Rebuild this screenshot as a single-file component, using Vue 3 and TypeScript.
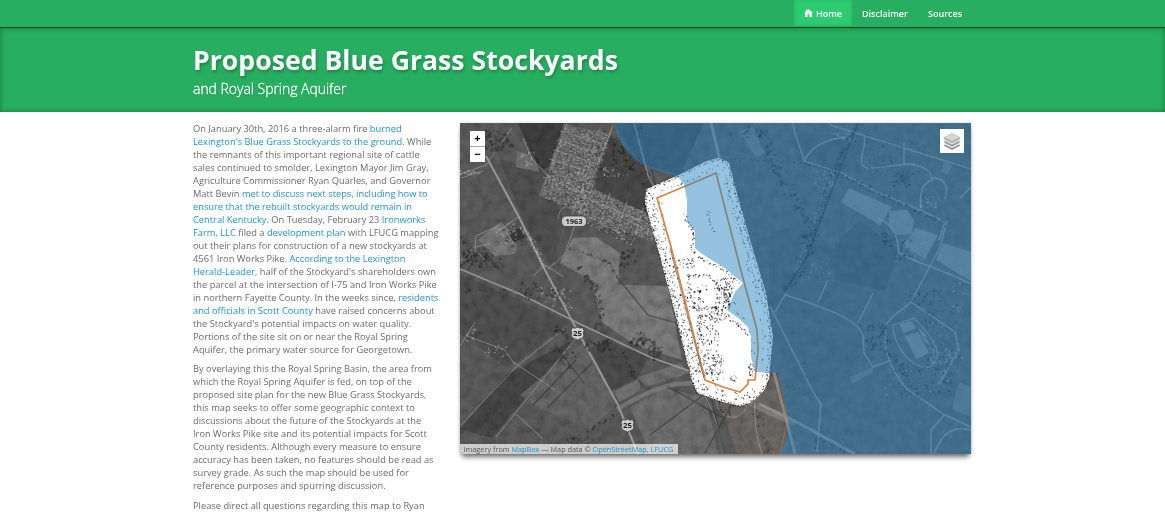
<script setup lang="ts">
interface Segment { text: string; link?: boolean }
interface Mark { x: number; y: number; w: number; h: number; a: number; o: number }

const t = (text: string): Segment => ({ text })
const l = (text: string): Segment => ({ text, link: true })

const paragraphs: Segment[][][] = [
  [
    [t('On January 30th, 2016 a three-alarm fire '), l('burned')],
    [l("Lexington's Blue Grass Stockyards to the ground"), t('. While')],
    [t('the remnants of this important regional site of cattle')],
    [t('sales continued to smolder, Lexington Mayor Jim Gray,')],
    [t('Agriculture Commissioner Ryan Quarles, and Governor')],
    [t('Matt Bevin '), l('met to discuss next steps, including how to')],
    [l('ensure that the rebuilt stockyards would remain in')],
    [l('Central Kentucky'), t('. On Tuesday, February 23 '), l('Ironworks')],
    [l('Farm, LLC'), t(' filed a '), l('development plan'), t(' with LFUCG mapping')],
    [t('out their plans for construction of a new stockyards at')],
    [t('4561 Iron Works Pike. '), l('According to the Lexington')],
    [l('Herald-Leader'), t(", half of the Stockyard's shareholders own")],
    [t('the parcel at the intersection of I-75 and Iron Works Pike')],
    [t('in northern Fayette County. In the weeks since, '), l('residents')],
    [l('and officials in Scott County'), t(' have raised concerns about')],
    [t("the Stockyard's potential impacts on water quality.")],
    [t('Portions of the site sit on or near the Royal Spring')],
    [t('Aquifer, the primary water source for Georgetown.')],
  ],
  [
    [t('By overlaying this the Royal Spring Basin, the area from')],
    [t('which the Royal Spring Aquifer is fed, on top of the')],
    [t('proposed site plan for the new Blue Grass Stockyards,')],
    [t('this map seeks to offer some geographic context to')],
    [t('discussions about the future of the Stockyards at the')],
    [t('Iron Works Pike site and its potential impacts for Scott')],
    [t('County residents. Although every measure to ensure')],
    [t('accuracy has been taken, no features should be read as')],
    [t('survey grade. As such the map should be used for')],
    [t('reference purposes and spurring discussion.')],
  ],
  [[t('Please direct all questions regarding this map to Ryan')]],
]

let seed = 41
const rnd = (): number => {
  seed = (seed * 16807) % 2147483647
  return seed / 2147483647
}

function alongPath(points: number[][], step: number, spread: number, size = 1.6): Mark[] {
  const out: Mark[] = []
  for (let i = 0; i < points.length - 1; i++) {
    const [x1, y1] = points[i]
    const [x2, y2] = points[i + 1]
    const len = Math.hypot(x2 - x1, y2 - y1)
    for (let d = 0; d < len; d += step) {
      const k = d / len
      out.push({
        x: x1 + (x2 - x1) * k + (rnd() - 0.5) * spread,
        y: y1 + (y2 - y1) * k + (rnd() - 0.5) * spread,
        w: 0.6 + rnd() * size,
        h: 0.5 + rnd() * size * 0.7,
        a: rnd() * 180,
        o: 0.45 + rnd() * 0.5,
      })
    }
  }
  return out
}

function cluster(cx: number, cy: number, w: number, h: number, n: number, size = 2): Mark[] {
  return Array.from({ length: n }, () => ({
    x: cx + (rnd() - 0.5) * w,
    y: cy + (rnd() - 0.5) * h,
    w: 0.6 + rnd() * size,
    h: 0.6 + rnd() * size * 0.6,
    a: rnd() * 180,
    o: 0.35 + rnd() * 0.6,
  }))
}

// Rows of small lots spanning the parallelogram of two edge vectors
function lots(x: number, y: number, ux: number, uy: number, vx: number, vy: number, nu: number, nv: number): Mark[] {
  const out: Mark[] = []
  const a = (Math.atan2(uy, ux) * 180) / Math.PI
  for (let i = 0; i < nu; i++) {
    for (let j = 0; j < nv; j++) {
      if (rnd() < 0.16) continue
      const u = (i + 0.2 + rnd() * 0.6) / nu
      const v = (j + 0.2 + rnd() * 0.6) / nv
      out.push({ x: x + ux * u + vx * v, y: y + uy * u + vy * v, w: 0.8 + rnd() * 1.5, h: 0.8 + rnd() * 0.9, a, o: 0.25 + rnd() * 0.6 })
    }
  }
  return out
}

const lotAreas: [number, number, number, number, number, number, number, number][] = [
  [564, 124, 47, 10, -20, 56, 21, 25],
  [548, 172, 42, 18, -8, 24, 18, 11],
  [583, 183, 77, 34, -8, 24, 32, 11],
  [578, 207, 58, 28, -4, 10, 24, 5],
]
const houses: Mark[] = [
  ...lotAreas.flatMap((a) => lots(...a)),
  ...cluster(527, 158, 16, 14, 24), ...cluster(507, 232, 22, 25, 26),
  ...cluster(549, 295, 16, 20, 22), ...cluster(567, 300, 10, 22, 18),
  ...cluster(471, 334, 10, 18, 18), ...cluster(497, 350, 22, 14, 20),
  ...cluster(472, 172, 24, 5, 22), ...cluster(615, 172, 26, 10, 18),
  ...alongPath([[522, 225], [546, 268]], 1.3, 5, 2),
]
const lotShadows: Mark[] = lotAreas.flatMap((a) => lots(...a))
const trees: Mark[] = [
  ...cluster(483, 258, 42, 18, 60, 4), ...cluster(498, 140, 26, 20, 50, 4),
  ...cluster(487, 290, 90, 4, 20, 3), ...cluster(600, 344, 28, 12, 35, 4),
  ...cluster(560, 330, 12, 10, 14, 4), ...cluster(629, 257, 14, 18, 30, 4),
  ...cluster(640, 340, 16, 16, 32, 4), ...cluster(656, 350, 14, 18, 30, 4),
  ...cluster(566, 358, 18, 18, 24, 3), ...cluster(650, 200, 12, 60, 32, 3),
  ...cluster(539, 290, 42, 16, 26, 4), ...cluster(515, 238, 20, 22, 22, 3),
  ...alongPath([[582, 268], [596, 287], [603, 315], [596, 330]], 1.4, 5, 3),
  ...alongPath([[623, 350], [634, 372], [642, 387]], 1.5, 3, 3),
  ...alongPath([[585, 436], [600, 423], [620, 412]], 2, 3, 2.5),
  ...alongPath([[530, 138], [535, 158], [554, 174]], 2, 5, 2.5),
  ...cluster(615, 155, 45, 28, 70, 2.8), ...cluster(478, 420, 30, 30, 12, 2),
  ...alongPath([[570, 248], [610, 262], [618, 276]], 1.4, 2, 2),
  ...alongPath([[757, 405], [768, 452]], 2, 9, 2),
  ...alongPath([[460, 236], [474, 257], [490, 269]], 2, 6, 3),
  ...cluster(580, 440, 28, 7, 18, 3), ...cluster(564, 449, 140, 6, 32, 3),
  ...cluster(725, 412, 12, 8, 14, 3),
]
const eastTrees: Mark[] = [
  ...alongPath([[757, 129], [774, 160], [790, 190], [813, 225], [803, 245]], 1.4, 10, 4),
  ...alongPath([[731, 158], [804, 163], [840, 172]], 2.3, 2, 2),
  ...alongPath([[855, 128], [832, 175], [820, 220], [803, 270], [786, 291]], 1.5, 5, 3),
  ...alongPath([[835, 171], [857, 182], [910, 207], [946, 224]], 1.6, 4, 2.5),
  ...cluster(903, 178, 18, 16, 44, 3), ...cluster(889, 157, 70, 34, 60, 2),
  ...cluster(889, 239, 14, 12, 34, 3), ...cluster(904, 250, 14, 22, 34, 3),
  ...cluster(876, 337, 18, 28, 60, 3), ...cluster(923, 382, 60, 30, 80, 3),
  ...cluster(942, 330, 38, 80, 68, 2.5), ...cluster(926, 295, 30, 18, 28, 3),
  ...cluster(830, 444, 32, 12, 22, 3), ...cluster(798, 378, 20, 32, 18, 2),
  ...cluster(630, 144, 26, 38, 30, 3), ...cluster(749, 132, 38, 14, 24, 3),
  ...alongPath([[884, 330], [892, 355], [910, 380]], 1.3, 7, 3),
]
const eastLights: Mark[] = [
  ...cluster(841, 136, 22, 8, 38), ...cluster(824, 180, 20, 20, 46),
  ...cluster(815, 272, 32, 20, 38), ...cluster(911, 250, 30, 26, 50),
  ...cluster(930, 202, 20, 12, 26, 3), ...cluster(945, 356, 28, 14, 38, 3),
  ...cluster(917, 384, 64, 30, 70), ...cluster(959, 300, 18, 40, 34),
  ...cluster(949, 337, 36, 70, 46), ...alongPath([[832, 175], [816, 225], [796, 270]], 2, 5, 1.8),
]

const planOutline = [[647, 190], [677, 177], [707, 162], [718, 159], [728, 163], [737, 197], [750, 243], [765, 293], [772, 337], [768, 380], [763, 390], [752, 401], [740, 405], [723, 401], [698, 392], [692, 378], [677, 317], [660, 253], [646, 203], [647, 190]]
const planInk: Mark[] = [
  ...alongPath(planOutline, 1.7, 2.2, 1.2),
  ...alongPath([[650, 192], [657, 231], [669, 273], [683, 324], [697, 382]], 1.5, 6, 1.3),
  ...alongPath([[657, 203], [683, 302], [706, 382]], 2.2, 7, 1.3),
  ...alongPath([[720, 166], [738, 220], [760, 298], [768, 336], [763, 380]], 2.7, 8, 1),
  ...alongPath([[726, 180], [744, 240], [763, 305]], 3.5, 1, 1),
  ...alongPath([[661, 192], [699, 176], [715, 168]], 2.6, 3, 1),
  ...alongPath([[699, 385], [724, 393], [742, 397], [754, 389]], 1.9, 7, 1.5),
  ...alongPath([[684, 214], [693, 232], [692, 250], [704, 260], [722, 268], [739, 282]], 2, 3, 1.5),
  ...alongPath([[688, 276], [707, 274], [724, 290], [731, 305], [695, 309], [688, 276]], 1.6, 2, 1.6),
  ...cluster(685, 264, 20, 12, 26, 1.5), ...cluster(724, 290, 18, 26, 80, 1.6),
  ...cluster(719, 313, 24, 14, 55, 1.5), ...cluster(694, 300, 18, 26, 38, 1.6),
  ...cluster(708, 344, 22, 60, 170, 1.3), ...cluster(717, 367, 16, 26, 50, 1.3),
  ...cluster(704, 288, 12, 10, 7), ...cluster(733, 378, 5, 7, 14, 1),
  ...cluster(751, 370, 5, 12, 20, 1.2),
  ...alongPath([[729, 316], [740, 325], [748, 335]], 2, 2, 1.5),
  ...alongPath([[708, 210], [711, 222], [713, 232]], 2, 2, 1.5),
  ...alongPath([[733, 301], [744, 320], [753, 344], [753, 370]], 5, 5, 1.2),
]
const outlinePoints = planOutline.map((p) => p.join(',')).join(' ')
const basin = 'M614 123 C617 141 626 153 640 163 C652 170 665 173 677 176 L684 184 L687 200 L687 222 L695 232 L695 248 L702 254 L723 267 L743 283 L735 292 L727 310 L737 317 L748 327 L751 337 L751 357 L755 372 L778 373 L783 392 L788 418 L787 438 L780 454 H971 V123 Z'
const place = (m: Mark): string => `translate(${m.x.toFixed(1)} ${m.y.toFixed(1)}) rotate(${m.a.toFixed(0)})`
</script>

<template>
  <div class="page">
    <nav class="topbar">
      <div class="wrap links">
        <a class="item active">
          <svg class="home" viewBox="0 0 10 9"><path d="M5 0 10 4.6H8.7V9H6.1V5.8H3.9V9H1.3V4.6H0L2 2.8V.8h1.4v.7Z" /></svg>
          <span>Home</span>
        </a>
        <a class="item disclaimer">Disclaimer</a>
        <a class="item sources">Sources</a>
      </div>
    </nav>

    <header class="hero">
      <div class="wrap">
        <h1>Proposed Blue Grass Stockyards</h1>
        <h2>and Royal Spring Aquifer</h2>
      </div>
    </header>

    <main class="wrap content">
      <article>
        <p v-for="(lines, pi) in paragraphs" :key="pi">
          <span v-for="(line, li) in lines" :key="li" class="line"><template v-for="(s, si) in line" :key="si"><a v-if="s.link">{{ s.text }}</a><span v-else>{{ s.text }}</span></template></span>
        </p>
      </article>

      <section class="map">
        <svg class="canvas" viewBox="460 123 511 331">
          <defs>
            <filter id="ground" x="0" y="0" width="100%" height="100%">
              <feTurbulence type="fractalNoise" baseFrequency=".11" numOctaves="4" seed="8" />
              <feColorMatrix values=".9 0 0 0 0  .9 0 0 0 0  .9 0 0 0 0  0 0 0 0 1" />
            </filter>
            <filter id="soft"><feGaussianBlur stdDeviation=".4" /></filter>
          </defs>
          <rect x="460" y="123" width="511" height="331" fill="#4c4c4c" />

          <g>
            <path fill="#353535" d="M518 123H564L553 165 540 171Z" />
            <path fill="#434343" d="M500 160 543 168 554 196 565 222 551 266 524 222Z" />
            <path fill="#434343" d="M460 274 570 322 508 368 460 334Z" />
            <path fill="#3b3b3b" d="M573 340 492 438 460 429 507 374Z" />
            <path fill="#686868" d="M573 238 596 237 620 253 618 286 598 284 560 263Z" />
            <path fill="#686868" d="M592 284 668 286 682 360 635 345 602 322Z" />
            <path fill="#555" d="M584 342 617 404 590 430 540 408 520 395Z" />
            <path fill="#606060" d="M638 377 680 363 690 373 645 387Z" />
            <path fill="#5c5c5c" d="M630 407 662 388 706 397 718 454H650Z" />
            <path fill="#606060" d="M615 391 639 379 643 389 619 402Z" />
            <path fill="#404040" d="M607 340 648 357 638 378 611 391 590 348Z" />
            <path fill="#656565" d="M478 240 500 222 520 237 515 254 495 256Z" />
            <path fill="#303030" d="M508 232 519 228 525 237 514 243Z" />
            <path fill="#606060" d="M517 151 533 156 540 172 516 167Z" />
            <path fill="#5a5754" d="M720 404 775 375 790 454H737Z" />
            <path fill="#3a3a3a" d="M614 123H704L680 175 639 163Z" />
            <path fill="#3d3d3d" d="M603 128 645 165 655 188 650 225 595 192Z" />
            <path fill="#5c5c5c" d="M564 124 611 134 591 188 660 219 652 242 583 216 578 210 539 196Z" />
            <path fill="#454545" d="M794 135 872 135 840 175 798 162ZM770 232 807 225 840 254 825 300 768 312Z" />
            <path fill="#484848" d="M800 252 860 277 837 329 784 312ZM780 320 860 345 862 355 830 400 785 390Z" />
            <path fill="#404040" d="M835 244 860 220 898 250 885 291 835 280Z" />
          </g>
          <rect class="terrain" x="460" y="123" width="511" height="331" filter="url(#ground)" />

          <g filter="url(#soft)">
            <g class="road major">
              <path d="M486 156 520 219 545 270 577 330 618 405 638 454" />
              <path d="M460 269 520 294 580 324 650 357 692 372" stroke-width="1.4" />
            </g>
            <path class="road freeway" d="M617 409C640 397 660 383 692 383H713L762 410 795 424" />
            <g class="road">
              <path d="M523 138 532 159 548 176 578 193 655 235" />
              <path d="M613 126 587 190 577 220 564 255 548 269" />
              <path d="M577 208C562 203 559 211 558 219M500 230 520 216M500 225 476 236 475 250 485 260" />
              <path d="M564 329 517 366 461 425M577 337 496 437M512 361 555 390M516 414 543 439" />
              <path d="M567 124 545 184M599 130 577 208M560 131 607 145M557 140 602 155M553 150 598 164M549 159 592 173M543 177 584 193M584 184 572 214" />
              <path d="M593 184 584 214M610 193 600 226M627 201 617 233M643 208 634 240M578 211 620 233M584 197 653 226" />
              <path d="M460 174 486 165 512 128M461 178 483 171M460 261 474 247 490 244" />
              <path d="M467 336 505 350 515 365M460 346 475 322M533 276 545 265 564 277" />
              <path d="M705 395Q720 425 723 454M755 393Q753 430 762 454M718 395C710 415 740 428 747 405" />
            </g>
            <g class="field-lines">
              <path d="M555 345 584 383M533 405 576 360M547 408 592 363M616 276 648 315 680 324M667 386 725 419" />
              <path d="M710 390 650 435M735 398 705 453M473 251 477 262M485 252 496 266M480 248 468 270" />
              <path d="M640 123 657 190M712 400 724 454" />
            </g>
            <g class="road east">
              <path class="wide" d="M711 123 720 160M774 372 795 454" />
              <path d="M634 123 648 175 655 190" />
              <path d="M770 306 813 392 821 404 817 452" />
              <path class="wide" d="M759 404 793 420 855 454" />
              <path d="M793 123C795 139 802 151 804 161L841 173 875 191 920 210 945 222 939 240" />
              <path d="M804 161C811 147 824 139 847 137M864 135C868 146 854 165 867 168 880 169 895 164 915 164" />
              <path d="M904 142 904 164C927 165 932 172 932 180 923 183 919 193 921 208" />
              <path d="M932 178C945 178 949 186 945 199M960 198 971 187M830 125 971 169" />
              <path class="dark" d="M806 258 817 230 838 174 858 123M784 292 809 254" />
              <path d="M878 219C893 222 898 239 899 253 915 263 943 269 971 284" />
              <path d="M912 300 940 247 947 221M786 295C817 306 858 317 863 336L864 353 873 367 891 360" />
              <path d="M786 293 775 312M858 323 873 293M818 302 828 280M886 330C882 350 893 373 906 388L943 414 971 427" />
              <path d="M886 325C893 313 906 308 911 302L955 332 959 350 939 384M945 414 931 430 931 454M934 454C943 430 955 426 971 430" />
            </g>
            <g class="east-land">
              <path d="M849 188 892 207 880 225 841 202ZM889 211 907 210 914 220 911 234 897 235 889 226ZM916 228 938 235 925 259 902 246ZM943 243 971 252V281L936 260Z" />
              <path d="M944 162 952 165 948 175 941 172ZM850 377 874 367 872 373 852 384ZM740 131 753 127 765 153 755 157ZM959 382 971 387V417L952 409Z" opacity=".6" />
            </g>
            <g class="arena">
              <path d="M893 325 914 318C930 334 940 350 937 358 933 370 924 370 912 362 902 355 892 336 893 325Z" />
              <path class="solid" d="M899 324 911 321 916 328 904 333ZM905 336 918 332 929 353 916 359ZM918 327 925 333 930 345 924 342Z" />
            </g>
          </g>

          <g fill="#242424"><rect v-for="(m, i) in lotShadows" :key="i" :width="m.w" :height="m.h" :transform="place(m)" :opacity="m.o * 0.75" /></g>
          <g fill="#222"><rect v-for="(m, i) in trees" :key="i" :width="m.w" :height="m.h" :transform="place(m)" :opacity="m.o * 0.65" /></g>
          <g fill="#bcbcbc"><rect v-for="(m, i) in houses" :key="i" :width="m.w" :height="m.h" :transform="place(m)" :opacity="m.o * 0.75" /></g>
          <g fill="#151515"><rect v-for="(m, i) in eastTrees" :key="i" :width="m.w" :height="m.h" :transform="place(m)" :opacity="m.o * 0.6" /></g>
          <g fill="#c5c5c5"><rect v-for="(m, i) in eastLights" :key="i" :width="m.w" :height="m.h" :transform="place(m)" :opacity="m.o * 0.45" /></g>

          <polygon :points="outlinePoints" fill="#fff" stroke="#fff" stroke-width="2" stroke-linejoin="round" />
          <g fill="#111"><rect v-for="(m, i) in planInk" :key="i" :width="m.w" :height="m.h" :transform="place(m)" :opacity="m.o" /></g>
          <path class="parcel" d="M657 198 700 180 716 173 740 267 757 330 758 350 755 380H748V384L740 392 723 387 705 380 683 293 670 243Z" />
          <path d="M670 248 687 314 704 378" fill="none" stroke="#555" stroke-width=".6" />
          <path :d="basin" fill="#2b85be" fill-opacity=".5" />
          <path d="M778 373 788 418 780 454" fill="none" stroke="#b87d58" stroke-width="1.2" opacity=".4" />
          <path d="M613 125 603 151" fill="none" stroke="#b98a60" stroke-width="1" opacity=".6" />

          <g class="shield">
            <rect x="561.5" y="216" width="25" height="10.5" rx="4.5" />
            <text x="574" y="224.3" textLength="17" lengthAdjust="spacingAndGlyphs">1963</text>
            <path d="M572.5 327.5Q575 329 577.5 327 580 329 582.5 327.5L584 330.5Q582.5 333 584 336 582.5 338.5 577.5 340 572.5 338.5 571 336 572.5 333 571 330.5Z" />
            <text x="577.6" y="336.3" textLength="9" lengthAdjust="spacingAndGlyphs">25</text>
            <path d="M622.5 419.5Q625 421 627.5 419 630 421 632.5 419.5L634 422.5Q632.5 425 634 428 632.5 430.5 627.5 432 622.5 430.5 621 428 622.5 425 621 422.5Z" />
            <text x="627.6" y="428.3" textLength="9" lengthAdjust="spacingAndGlyphs">25</text>
          </g>
        </svg>

        <div class="zoom"><span>+</span><span>−</span></div>
        <div class="layers">
          <svg viewBox="0 0 20 20">
            <path d="M10 10.5 18.5 14.5 10 19 1.5 14.5Z" fill="#8e8e8e" />
            <path d="M10 9 18.5 13 10 17.3 1.5 13Z" fill="#dcdcdc" />
            <path d="M10 7 18.5 11 10 15.2 1.5 11Z" fill="#8e8e8e" />
            <path d="M10 5.5 18.5 9.5 10 13.7 1.5 9.5Z" fill="#dcdcdc" />
            <path d="M10 3.2 18.5 7.6 10 11.8 1.5 7.6Z" fill="#8e8e8e" />
            <path d="M10 2 18.5 6.4 10 10.7 1.5 6.4Z" fill="#d0d4ce" stroke="#b4b4b4" stroke-width=".4" />
          </svg>
        </div>
        <div class="credit">Imagery from <a>MapBox</a> — Map data © <a>OpenStreetMap, LFUCG</a></div>
      </section>
    </main>
  </div>
</template>

<style>
html, body { margin: 0; background: #fff; overflow: hidden; }
</style>

<style scoped>
.page { height: 514px; overflow: hidden; background: #fff; color: #6b6b6b; font-family: "Open Sans", "Noto Sans", sans-serif; }
.wrap { width: 778px; margin-left: 193px; }
.topbar { height: 27px; background: #27ae60; border-bottom: 1px solid #10421f; }
.links { display: flex; justify-content: flex-end; height: 26px; }
.item { display: flex; align-items: center; box-sizing: border-box; height: 26px; color: #fff; font-size: 9px; font-weight: 600; padding: 1px 9px 0 10px; white-space: nowrap; }
.item.active { width: 58px; gap: 3px; background: #2ecc71; box-shadow: inset 0 0 5px rgba(25, 150, 70, .35); }
.item.disclaimer { width: 66px; }
.item.sources { width: 53px; }
.home { width: 9px; height: 8px; fill: #fff; margin-top: -2px; flex: none; }
.hero { height: 84px; background: #27ae60; box-shadow: inset 0 0 5px rgba(0, 60, 20, .5); overflow: hidden; }
h1 { margin: 14px 0 0; color: #fff; font-size: 26.65px; line-height: 37px; font-weight: 700; white-space: nowrap; text-shadow: 1px 2px 3px rgba(0, 0, 0, .25); }
h2 { margin: 0; color: #fff; font-size: 14px; line-height: 19px; font-weight: 300; white-space: nowrap; letter-spacing: -.03px; -webkit-text-stroke: .3px #fff; text-shadow: 0 1px 2px rgba(0, 0, 0, .18); }
.content { display: flex; }
article { width: 267px; padding-top: 10px; flex: none; font-size: 9.3px; }
p { margin: 0 0 6.3px; line-height: 13px; }
.line { display: block; white-space: nowrap; }
a { color: #1c94cb; }
.map { position: relative; width: 511px; height: 331px; margin-top: 11px; box-shadow: 0 5px 5px -2px rgba(0, 0, 0, .55), 0 0 3px rgba(0, 0, 0, .18); }
.canvas { display: block; width: 511px; height: 331px; }
.terrain { mix-blend-mode: overlay; opacity: .32; }
.road { fill: none; stroke: #a1a1a1; stroke-width: 1; opacity: .62; }
.road.major { stroke: #a5a5a5; stroke-width: 2; opacity: .8; }
.road.freeway { stroke: #888; stroke-width: 4.5; }
.road.east { stroke: #a8a8a8; stroke-width: 1.5; opacity: .6; }
.wide { stroke-width: 3; }
.dark { stroke: #222; }
.field-lines { fill: none; stroke: #343434; stroke-width: 1.2; opacity: .6; }
.east-land { fill: #a7a7a7; opacity: .5; }
.arena { fill: none; stroke: #aaa; stroke-width: 1.5; opacity: .5; }
.arena .solid { fill: #aaa; stroke: none; }
.parcel { fill: none; stroke: #d9843b; stroke-width: 1.7; }
.shield { fill: #ccc; stroke: #3b3b3b; stroke-width: .8; }
.shield text { fill: #222; stroke: none; font: 700 7.5px "Open Sans", sans-serif; text-anchor: middle; }
.zoom { position: absolute; left: 10px; top: 8px; width: 15px; background: #fff; }
.zoom span { display: block; height: 15px; line-height: 14px; text-align: center; color: #000; font-size: 11px; font-weight: 700; }
.zoom span + span { border-top: 1px solid #aaa; }
.layers { position: absolute; right: 7px; top: 6px; width: 24px; height: 24px; background: #fff; display: grid; place-items: center; }
.layers svg { width: 20px; height: 20px; }
.credit { position: absolute; left: 0; bottom: 0; box-sizing: border-box; width: 218px; height: 10px; padding-left: 3.5px; background: rgba(255, 255, 255, .7); color: #555; font-size: 7.3px; line-height: 11px; white-space: nowrap; }
</style>
